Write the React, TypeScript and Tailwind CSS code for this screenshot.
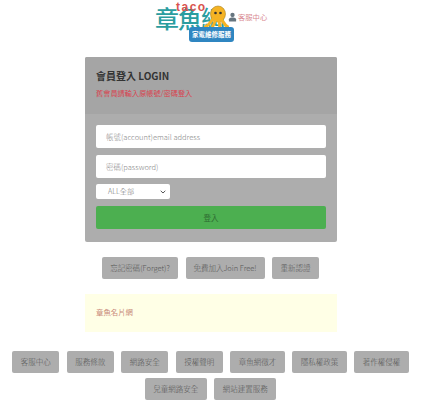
const footerLinks = ["客服中心", "服務條款", "網路安全", "授權聲明", "章魚網徵才", "隱私權政策", "著作權侵權", "兒童網路安全", "網站建置服務"];
const cjk = "font-['Noto_Sans_CJK_TC','Noto_Sans',sans-serif]";

function Logo() {
  return (
    <div className="relative h-[42px] w-[426px]">
      <div className="absolute left-[155px] top-[4px] flex text-[#2a9d9f] text-[24px] leading-[26px] tracking-[-1px] font-medium">
        <span>章</span>
        <span>魚</span>
        <span>網</span>
      </div>
      <span className="absolute left-[176px] top-[-1px] text-[12px] leading-[14px] font-bold tracking-[1.5px] text-[#d9534f] font-['Liberation_Sans',sans-serif]">taco</span>
      <svg className="absolute left-[204px] top-[4px]" width="25" height="27" viewBox="0 0 25 27">
        <ellipse cx="14" cy="9" rx="7.5" ry="8" fill="#f5b324" stroke="#a8862a" strokeWidth="0.6" />
        <path d="M9 14 C6 18 4 21 1 22 M11 16 C10 20 8 23 6 26 M15 16 C16 20 16 23 15 26 M18 15 C20 18 21 21 24 22" stroke="#f5b324" strokeWidth="3" fill="none" strokeLinecap="round" />
        <circle cx="11.5" cy="8" r="1.3" fill="#333" />
        <circle cx="16.5" cy="8" r="1.3" fill="#333" />
      </svg>
      <div className="absolute left-[189px] top-[26px] w-[45px] h-[15px] rounded-[3px] bg-[#2f86c1] text-white text-[6.5px] leading-[15px] font-bold text-center">家電維修服務</div>
      <div className="absolute left-[228px] top-[10px] flex items-center gap-[1px]">
        <svg width="9" height="10" viewBox="0 0 10 10">
          <circle cx="5" cy="2.8" r="2.4" fill="#66757f" />
          <path d="M1 10 V7.5 C1 6 3 5.5 5 5.5 C7 5.5 9 6 9 7.5 V10 Z" fill="#66757f" />
        </svg>
        <span className="text-[7.3px] leading-[12px] text-[#d98a92]">客服中心</span>
      </div>
    </div>
  );
}

function GrayButton({ label, className }: { label: string; className: string }) {
  return (
    <a className={`h-[22px] rounded-[2px] bg-[#adadad] text-[#555] text-[7.5px] font-light leading-[22px] text-center whitespace-nowrap ${className}`}>
      {label}
    </a>
  );
}

export default function App() {
  return (
    <div className={`w-[426px] h-[400px] overflow-hidden bg-white pt-[1px] ${cjk}`}>
      <Logo />

      {/* Login panel */}
      <div className="w-[252px] ml-[85px] mt-[14px] rounded-[2px] overflow-hidden bg-[#adadad]">
        <div className="h-[57px] bg-[#a5a5a5] px-[11px] pt-[11px]">
          <h1 className="text-[10px] leading-[15px] font-bold text-[#333]">會員登入 LOGIN</h1>
          <p className="mt-[4px] text-[7.2px] leading-[12px] text-[#d9434f]">舊會員請輸入原帳號/密碼登入</p>
        </div>
        <div className="px-[11px] pt-[11px] pb-[13px]">
          <div className="h-[23px] rounded-[2px] bg-white px-[10px] text-[7.5px] font-light leading-[23px] text-[#888]">帳號(account)email address</div>
          <div className="h-[23px] mt-[7px] rounded-[2px] bg-white px-[10px] text-[7.5px] font-light leading-[23px] text-[#888]">密碼(password)</div>
          <div className="h-[15px] w-[74px] mt-[6px] rounded-[2px] bg-white pl-[12px] pr-[4px] flex items-center justify-between text-[7.2px] font-light text-[#777]">
            <span>ALL全部</span>
            <svg width="6" height="4" viewBox="0 0 6 4">
              <path d="M0.7 0.8 L3 3 L5.3 0.8" stroke="#555" strokeWidth="1" fill="none" />
            </svg>
          </div>
          <div className="h-[23px] mt-[7px] rounded-[2px] bg-[#4caf50] text-[#2e6b31] text-[7.5px] leading-[23px] text-center">登入</div>
        </div>
      </div>

      {/* Account links */}
      <div className="flex justify-center gap-[7.5px] mt-[15px] pr-[5px]">
        <GrayButton label="忘記密碼(Forget)?" className="w-[76px]" />
        <GrayButton label="免費加入Join Free!" className="w-[79px]" />
        <GrayButton label="重新認證" className="w-[47px]" />
      </div>

      {/* Notice */}
      <div className="w-[252px] h-[38px] ml-[85px] mt-[15px] bg-[#ffffe6] px-[11px] text-[7.4px] leading-[35px] text-[#c98a7a]">章魚名片網</div>

      {/* Footer */}
      <div className="flex flex-wrap justify-center gap-x-[7.5px] gap-y-[5px] mt-[19px] pl-[8px] pr-[13px]">
        {footerLinks.map((label) => (
          <GrayButton key={label} label={label} className="px-[8.5px]" />
        ))}
      </div>
    </div>
  );
}
